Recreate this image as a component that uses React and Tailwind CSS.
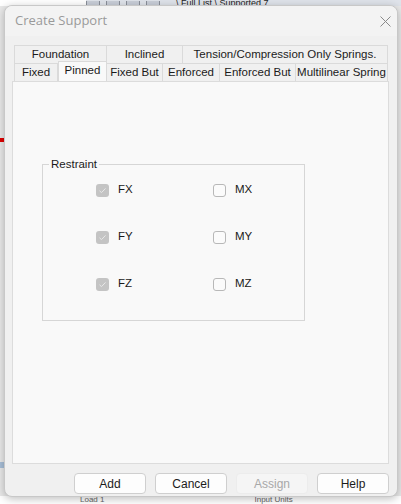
import React from 'react';

const ui = { fontFamily: '"Liberation Sans", Arial, sans-serif' };

function Check({ label, checked }) {
    return (
        <div className="flex items-center h-[14px]">
            {checked ? (
                <div className="w-[13px] h-[13px] rounded-[3px] bg-[#c4c4c4] flex items-center justify-center">
                    <svg width="9" height="9" viewBox="0 0 9 9">
                        <path d="M1.5 4.8 L3.5 6.6 L7.5 2.4" fill="none" stroke="#e8e8e8" strokeWidth="1" />
                    </svg>
                </div>
            ) : (
                <div className="w-[13px] h-[13px] rounded-[3px] border border-[#b8b8b8] bg-[#fbfbfb]" />
            )}
            <span className="ml-[9px] text-[11.5px] text-[#1a1a1a]">{label}</span>
        </div>
    );
}

function Btn({ label, disabled }) {
    return (
        <div className={`w-[72px] h-[21px] rounded-[4px] border flex items-center justify-center text-[12px] ${disabled ? 'border-[#ececec] bg-[#f5f5f5] text-[#a8a8a8]' : 'border-[#cfcfcf] bg-[#fdfdfd] text-[#1b1b1b]'}`}>
            {label}
        </div>
    );
}

function Tab({ label, w, active, top }) {
    return (
        <div
            className={`flex items-center justify-center border-[#dadada] text-[11.5px] text-[#1b1b1b] ${top ? 'h-[18px] border-t border-r' : 'h-[19px] border-t border-r'} ${active ? 'bg-[#f9f9f9] h-[21px] -mt-[2px] pb-[3px] border-l' : 'bg-[#f0f0f0]'}`}
            style={{ width: w }}
        >
            {label}
        </div>
    );
}

export default function App() {
    return (
        <div className="w-[401px] h-[504px] bg-[#e9e9e9] relative overflow-hidden" style={ui}>
            {/* background app bits */}
            <div className="h-[6px] flex">
                <div className="w-[86px] bg-white" />
                <div className="flex-1 bg-[#dfe3ea] flex items-end overflow-hidden">
                    {[0, 1, 2, 3].map((i) => (
                        <div key={i} className="w-[14px] h-[5px] mr-[6px] border-x border-[#8a8f99] bg-[#c9ced8]" />
                    ))}
                    <span className="ml-[10px] text-[9px] leading-[6px] text-[#222] whitespace-nowrap">\ Full List \ Supported 7</span>
                </div>
            </div>
            <div className="absolute left-0 top-[138px] w-[4px] h-[4px] bg-[#e00000]" />
            <div className="absolute left-0 top-[462px] w-[4px] h-[6px] bg-[#a8bfd8]" />
            <div className="absolute left-0 right-0 bottom-0 h-[8px] bg-white flex text-[8px] text-[#666] leading-[8px]">
                <span className="ml-[80px]">Load 1</span>
                <span className="ml-[150px]">Input Units</span>
            </div>

            {/* dialog */}
            <div className="absolute left-[4px] top-[5px] w-[394px] h-[492px] rounded-[8px] bg-[#f0f0f0] border border-[#c8c8c8] shadow-[0_2px_8px_rgba(0,0,0,0.25)] flex flex-col">
                <div className="h-[30px] flex items-center justify-between pl-[10px] pr-[6px] rounded-t-[8px] bg-[#f3f3f3]">
                    <span className="text-[13px] text-[#9a9a9a]" style={{ fontFamily: '"Open Sans", "Noto Sans", sans-serif' }}>Create Support</span>
                    <svg width="11" height="11" viewBox="0 0 11 11">
                        <path d="M0.5 0.5 L10.5 10.5 M10.5 0.5 L0.5 10.5" stroke="#8a8a8a" strokeWidth="1" />
                    </svg>
                </div>

                <div className="flex flex-col pl-[7px] pt-[9px]">
                    <div className="flex ml-[2px]">
                        <div className="border-l border-[#dadada] flex">
                            <Tab top label="Foundation" w={92} />
                            <Tab top label="Inclined" w={76} />
                            <Tab top label="Tension/Compression Only Springs." w={205} />
                        </div>
                    </div>
                    <div className="flex ml-[2px] items-end h-[19px]">
                        <div className="border-l border-[#dadada] flex items-end">
                            <Tab label="Fixed" w={43} />
                            <Tab label="Pinned" w={49} active />
                            <Tab label="Fixed But" w={56} />
                            <Tab label="Enforced" w={57} />
                            <Tab label="Enforced But" w={76} />
                            <Tab label="Multilinear Spring" w={92} />
                        </div>
                    </div>
                    <div className="w-[377px] h-[383px] bg-[#f9f9f9] border border-[#dcdcdc] -mt-[1px]">
                        <div className="ml-[29px] mt-[82px] w-[263px] h-[157px] border border-[#d6d6d6] relative">
                            <span className="absolute -top-[8px] left-[6px] px-[2px] bg-[#f9f9f9] text-[11.5px] text-[#1b1b1b] leading-[14px]">Restraint</span>
                            <div className="grid grid-cols-[117px_80px] ml-[53px] mt-[18px] gap-y-[33px]">
                                <Check label="FX" checked />
                                <Check label="MX" />
                                <Check label="FY" checked />
                                <Check label="MY" />
                                <Check label="FZ" checked />
                                <Check label="MZ" />
                            </div>
                        </div>
                    </div>
                </div>

                <div className="flex justify-end gap-[9px] pr-[8px] mt-[9px]">
                    <Btn label="Add" />
                    <Btn label="Cancel" />
                    <Btn label="Assign" disabled />
                    <Btn label="Help" />
                </div>
            </div>
        </div>
    );
}
